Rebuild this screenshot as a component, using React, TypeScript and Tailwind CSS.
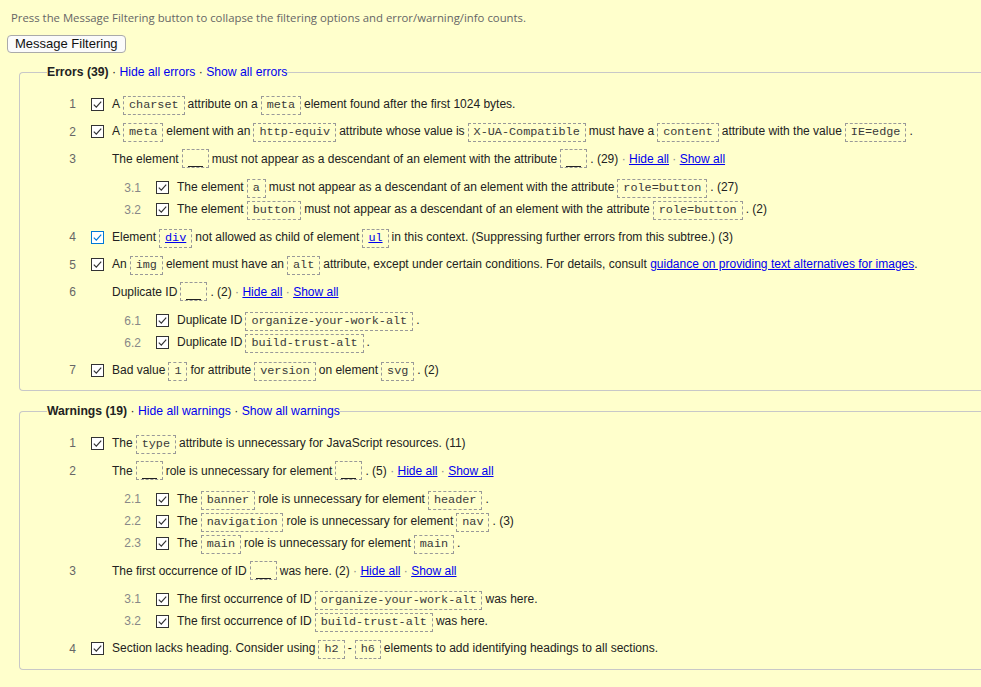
import React from "react";

const LINK = "text-[#0000ee] underline";

function C({ children, link }: { children: React.ReactNode; link?: boolean }) {
  return (
    <code className="inline-block mx-[3px] px-[5px] border border-dashed border-[#999] font-['Liberation_Mono',monospace] text-[11.8px] leading-[17px] text-[#3a3a3a] align-baseline">
      {link ? <span className={LINK}>{children}</span> : children}
    </code>
  );
}

function Blank() {
  return (
    <span className="inline-block h-[19px] mx-[3px] px-[5px] border border-dashed border-[#999] align-[-5px]">
      <span className="block w-[15px] h-[17px] border-b border-[#222]" />
    </span>
  );
}

function Check({ blue }: { blue?: boolean }) {
  return (
    <span
      className={
        blue
          ? "w-[13px] h-[13px] shrink-0 border border-[#0078d7] bg-white flex items-center justify-center"
          : "w-[13px] h-[13px] shrink-0 border border-[#333] bg-white flex items-center justify-center"
      }
    >
      <svg width="11" height="11" viewBox="0 0 11 11">
        <path
          d="M1.8 5.6 L4.3 8.1 L9.2 2.6"
          fill="none"
          stroke={blue ? "#0078d7" : "#333"}
          strokeWidth="1.2"
        />
      </svg>
    </span>
  );
}

function Row({
  num,
  check = true,
  blue,
  sub,
  children,
}: {
  num: string;
  check?: boolean;
  blue?: boolean;
  sub?: boolean;
  children: React.ReactNode;
}) {
  return (
    <div className="flex items-center h-[20px]">
      <span className={sub ? "w-[29px] text-right text-[#888]" : "w-[29px] text-right text-[#666]"}>{num}</span>
      <span className="w-[15px] shrink-0" />
      {check ? <Check blue={blue} /> : <span className="w-[13px] shrink-0" />}
      <span className="ml-[8px] whitespace-nowrap leading-[20px]">{children}</span>
    </div>
  );
}

function Group({ head, children }: { head: React.ReactNode; children: React.ReactNode }) {
  return (
    <div className="flex flex-col">
      {head}
      <div className="ml-[65px] mt-[8.5px] flex flex-col gap-[2px]">{children}</div>
    </div>
  );
}

function HideShow() {
  return (
    <>
      {" "}
      <span className="text-[#888]">·</span> <a className={LINK}>Hide all</a>{" "}
      <span className="text-[#888]">·</span> <a className={LINK}>Show all</a>
    </>
  );
}

function Box({ legend, hide, show, children }: { legend: string; hide: string; show: string; children: React.ReactNode }) {
  return (
    <fieldset className="ml-[12px] border border-r-0 border-[#c8c8c8] rounded-l-[4px] pl-[27px] pb-[10px]">
      <legend className="leading-[14px] text-[12.2px] text-[#222]">
        <b>{legend}</b> · <a className="text-[#0000ee]">{hide}</a> · <a className="text-[#0000ee]">{show}</a>
      </legend>
      <div className="mt-[15px] flex flex-col gap-[7.5px]">{children}</div>
    </fieldset>
  );
}

export default function App() {
  return (
    <div className="min-h-screen bg-[#ffffcc] pl-[7px] pt-[11px] font-['Liberation_Sans',Arial,sans-serif] text-[12px] text-[#222]">
      <p className="pl-[4px] font-['Open_Sans',sans-serif] text-[11.35px] leading-[14px] text-[#666]">
        Press the Message Filtering button to collapse the filtering options and error/warning/info counts.
      </p>
      <button className="mt-[10px] h-[18px] px-[7px] border border-[#aaa] rounded-[4px] bg-[#fbfbfb] text-[13px] leading-[16px] text-[#111]">
        Message Filtering
      </button>
      <div className="mt-[12px]">
        <Box legend="Errors (39)" hide="Hide all errors" show="Show all errors">
          <Row num="1">
            A<C>charset</C>attribute on a<C>meta</C>element found after the first 1024 bytes.
          </Row>
          <Row num="2">
            A<C>meta</C>element with an<C>http-equiv</C>attribute whose value is<C>X-UA-Compatible</C>must have a
            <C>content</C>attribute with the value<C>IE=edge</C>.
          </Row>
          <Group
            head={
              <Row num="3" check={false}>
                The element<Blank />must not appear as a descendant of an element with the attribute<Blank />. (29)
                <HideShow />
              </Row>
            }
          >
            <Row num="3.1" sub>
              The element<C>a</C>must not appear as a descendant of an element with the attribute<C>role=button</C>. (27)
            </Row>
            <Row num="3.2" sub>
              The element<C>button</C>must not appear as a descendant of an element with the attribute
              <C>role=button</C>. (2)
            </Row>
          </Group>
          <Row num="4" blue>
            Element<C link>div</C>not allowed as child of element<C link>ul</C>in this context. (Suppressing further
            errors from this subtree.) (3)
          </Row>
          <Row num="5">
            An<C>img</C>element must have an<C>alt</C>attribute, except under certain conditions. For details, consult{" "}
            <a className={LINK}>guidance on providing text alternatives for images</a>.
          </Row>
          <Group
            head={
              <Row num="6" check={false}>
                Duplicate ID<Blank />. (2)
                <HideShow />
              </Row>
            }
          >
            <Row num="6.1" sub>
              Duplicate ID<C>organize-your-work-alt</C>.
            </Row>
            <Row num="6.2" sub>
              Duplicate ID<C>build-trust-alt</C>.
            </Row>
          </Group>
          <Row num="7">
            Bad value<C>1</C>for attribute<C>version</C>on element<C>svg</C>. (2)
          </Row>
        </Box>
      </div>
      <div className="mt-[13px]">
        <Box legend="Warnings (19)" hide="Hide all warnings" show="Show all warnings">
          <Row num="1">
            The<C>type</C>attribute is unnecessary for JavaScript resources. (11)
          </Row>
          <Group
            head={
              <Row num="2" check={false}>
                The<Blank />role is unnecessary for element<Blank />. (5)
                <HideShow />
              </Row>
            }
          >
            <Row num="2.1" sub>
              The<C>banner</C>role is unnecessary for element<C>header</C>.
            </Row>
            <Row num="2.2" sub>
              The<C>navigation</C>role is unnecessary for element<C>nav</C>. (3)
            </Row>
            <Row num="2.3" sub>
              The<C>main</C>role is unnecessary for element<C>main</C>.
            </Row>
          </Group>
          <Group
            head={
              <Row num="3" check={false}>
                The first occurrence of ID<Blank />was here. (2)
                <HideShow />
              </Row>
            }
          >
            <Row num="3.1" sub>
              The first occurrence of ID<C>organize-your-work-alt</C>was here.
            </Row>
            <Row num="3.2" sub>
              The first occurrence of ID<C>build-trust-alt</C>was here.
            </Row>
          </Group>
          <Row num="4">
            Section lacks heading. Consider using<C>h2</C>-<C>h6</C>elements to add identifying headings to all sections.
          </Row>
        </Box>
      </div>
    </div>
  );
}
